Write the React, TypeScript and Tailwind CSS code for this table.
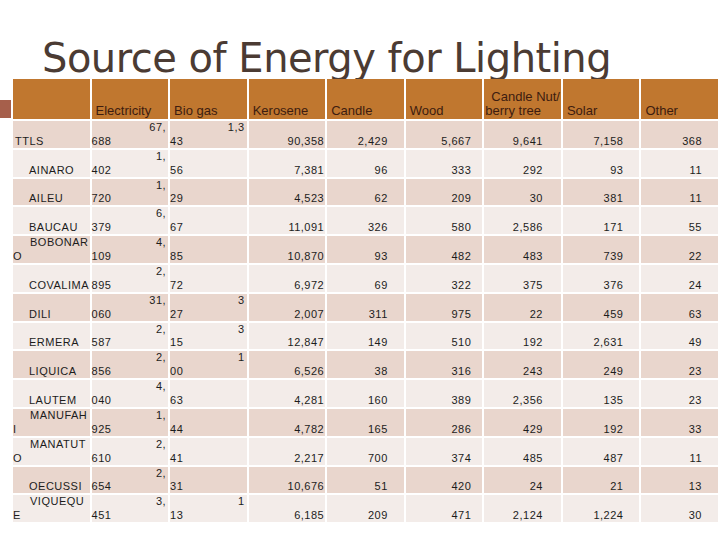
import React from 'react'

type Row = {
  name: string
  name2?: string
  top?: boolean
  elecTop: string
  elecBottom: string
  bioTop: string
  bioBottom: string
  values: string[]
}

const rows: Row[] = [
  { name: 'TTLS', elecTop: '67,', elecBottom: '688', bioTop: '1,3', bioBottom: '43', values: ['90,358', '2,429', '5,667', '9,641', '7,158', '368'] },
  { name: 'AINARO', elecTop: '1,', elecBottom: '402', bioTop: '', bioBottom: '56', values: ['7,381', '96', '333', '292', '93', '11'] },
  { name: 'AILEU', elecTop: '1,', elecBottom: '720', bioTop: '', bioBottom: '29', values: ['4,523', '62', '209', '30', '381', '11'] },
  { name: 'BAUCAU', elecTop: '6,', elecBottom: '379', bioTop: '', bioBottom: '67', values: ['11,091', '326', '580', '2,586', '171', '55'] },
  { name: 'BOBONAR', name2: 'O', top: true, elecTop: '4,', elecBottom: '109', bioTop: '', bioBottom: '85', values: ['10,870', '93', '482', '483', '739', '22'] },
  { name: 'COVALIMA', elecTop: '2,', elecBottom: '895', bioTop: '', bioBottom: '72', values: ['6,972', '69', '322', '375', '376', '24'] },
  { name: 'DILI', elecTop: '31,', elecBottom: '060', bioTop: '3', bioBottom: '27', values: ['2,007', '311', '975', '22', '459', '63'] },
  { name: 'ERMERA', elecTop: '2,', elecBottom: '587', bioTop: '3', bioBottom: '15', values: ['12,847', '149', '510', '192', '2,631', '49'] },
  { name: 'LIQUICA', elecTop: '2,', elecBottom: '856', bioTop: '1', bioBottom: '00', values: ['6,526', '38', '316', '243', '249', '23'] },
  { name: 'LAUTEM', elecTop: '4,', elecBottom: '040', bioTop: '', bioBottom: '63', values: ['4,281', '160', '389', '2,356', '135', '23'] },
  { name: 'MANUFAH', name2: 'I', top: true, elecTop: '1,', elecBottom: '925', bioTop: '', bioBottom: '44', values: ['4,782', '165', '286', '429', '192', '33'] },
  { name: 'MANATUT', name2: 'O', top: true, elecTop: '2,', elecBottom: '610', bioTop: '', bioBottom: '41', values: ['2,217', '700', '374', '485', '487', '11'] },
  { name: 'OECUSSI', elecTop: '2,', elecBottom: '654', bioTop: '', bioBottom: '31', values: ['10,676', '51', '420', '24', '21', '13'] },
  { name: 'VIQUEQU', name2: 'E', top: true, elecTop: '3,', elecBottom: '451', bioTop: '1', bioBottom: '13', values: ['6,185', '209', '471', '2,124', '1,224', '30'] },
]

// right padding per value column: Kerosene, Candle, Wood, Candle Nut, Solar, Other
const valuePad = ['pr-[1px]', 'pr-[16px]', 'pr-[11px]', 'pr-[18px]', 'pr-[16px]', 'pr-[16px]']

const headers = ['Electricity', 'Bio gas', 'Kerosene', 'Candle', 'Wood', 'CANDLENUT', 'Solar', 'Other']

function Cell({ bg, children, className = '' }: { bg: string; children: React.ReactNode; className?: string }) {
  return (
    <div className={`${bg} h-[26.8px] flex flex-col justify-between leading-[13px] whitespace-nowrap ${className}`}>
      {children}
    </div>
  )
}

export default function App() {
  return (
    <div className="w-[720px] h-[540px] bg-white overflow-hidden font-['Liberation_Sans',Arial,sans-serif]">
      {/* Title */}
      <div className="h-[79px] pl-[42px] pt-[34px]">
        <h1 className="font-['DejaVu_Sans',sans-serif] text-[40px] leading-[48px] text-[#4b3b33] tracking-[-0.5px] whitespace-nowrap">
          Source of Energy for Lighting
        </h1>
      </div>

      <div className="flex items-start gap-[2px]">
        {/* left decoration */}
        <div className="w-[11px] h-[18px] mt-[21px] bg-[#a65f4b]" />

        <div className="relative w-[705px] flex flex-col gap-[2px]">
          {/* Header row */}
          <div className="grid grid-cols-9 gap-[2px] h-[40px]">
            <div className="bg-[#c0772f]" />
            {headers.map((h) => (
              <div
                key={h}
                className="bg-[#c0772f] flex flex-col justify-end pl-[4px] pb-[1px] text-[13px] leading-[14px] text-[#3d1c10] whitespace-nowrap"
              >
                {h === 'CANDLENUT' ? (
                  <>
                    <span className="pl-[3px]">Candle Nut/</span>
                    <span className="-ml-[3px]">berry tree</span>
                  </>
                ) : (
                  <span>{h}</span>
                )}
              </div>
            ))}
          </div>

          {/* Data rows */}
          {rows.map((r, i) => {
            const bg = i % 2 === 0 ? 'bg-[#e9d6cd]' : 'bg-[#f3ece9]'
            return (
              <div key={r.name} className="grid grid-cols-9 gap-[2px] text-[11px] tracking-[0.5px] text-[#1c1c1c]">
                <Cell bg={bg} className="relative z-10">
                  {r.top ? (
                    <>
                      <span className="pl-[17px]">{r.name}</span>
                      <span className="pl-0">{r.name2}</span>
                    </>
                  ) : (
                    <>
                      <span />
                      <span className={i === 0 ? 'pl-[2px]' : 'pl-[16px]'}>{r.name}</span>
                    </>
                  )}
                </Cell>
                <Cell bg={bg}>
                  <span className="text-right pr-[2px]">{r.elecTop}</span>
                  <span>{r.elecBottom}</span>
                </Cell>
                <Cell bg={bg}>
                  <span className="text-right pr-[2px] min-h-[13px]">{r.bioTop}</span>
                  <span>{r.bioBottom}</span>
                </Cell>
                {r.values.map((v, j) => (
                  <Cell key={j} bg={bg}>
                    <span />
                    <span className={`text-right ${valuePad[j]}`}>{v}</span>
                  </Cell>
                ))}
              </div>
            )
          })}
        </div>
      </div>
    </div>
  )
}
